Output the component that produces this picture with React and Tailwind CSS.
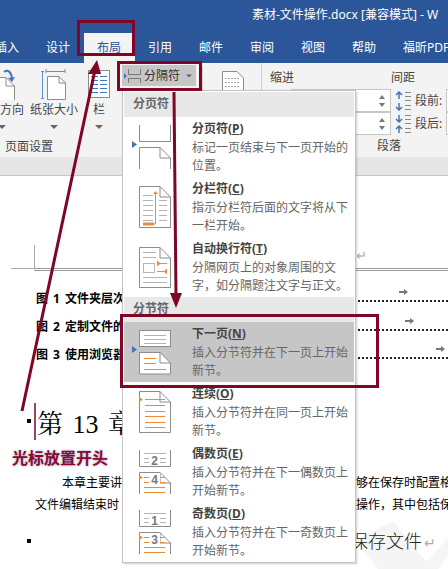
import React from "react";

const GRAY = "#8c8c8c";
const LINE = "#b4b4b4";
const ORANGE = "#ed8b37";
const RED = "#7f0624";

// page outline with folded corner, x from 15 to 46 in the icon box
function Page({ top, bottom, open = false }) {
    const d = `M15.5 ${open ? bottom : bottom - 0.5} V${top + 0.5} H36 L46.5 ${top + 11} V${open ? bottom : bottom - 0.5}${open ? "" : " H15.5"}`;
    return (
        <g>
            <path d={d} fill="#fff" stroke={GRAY} />
            <path d={`M36 ${top + 0.5} V${top + 11} H46.5`} fill="none" stroke={GRAY} />
        </g>
    );
}

function Lines({ ys, x1 = 20, x2 = 42, color = LINE }) {
    return ys.map((y) => <path key={y} d={`M${x1} ${y}.5 H${x2}`} stroke={color} />);
}

function Marker() {
    return <path d="M8 24 L13 27.5 L8 31 Z" fill="#3f78b8" />;
}

function IconPageBreak() {
    return (
        <svg width="69" height="60">
            <Marker />
            <path d="M15.5 8 V24.5 H46.5 V8" fill="none" stroke={GRAY} />
            <Page top={30} bottom={52} open />
        </svg>
    );
}

function IconColumn() {
    return (
        <svg width="69" height="60">
            <Page top={9} bottom={51} />
            <Lines ys={[18, 23, 28, 33, 38, 43]} x1={19} x2={29} />
            <Lines ys={[23, 28, 33, 38, 43]} x1={35} x2={43} />
            <path d="M19 47 H31.5 V16" fill="none" stroke={ORANGE} />
            <path d="M19 45.5 H30 V48.5 H19 Z" fill={ORANGE} />
            <path d="M29 17 L31.5 14 L34 17 Z" fill={ORANGE} />
        </svg>
    );
}

function IconWrap() {
    return (
        <svg width="69" height="60">
            <Page top={10} bottom={51} />
            <Lines ys={[15, 20]} x1={19} x2={32} />
            <rect x="19.5" y="26.5" width="11" height="9" fill="#fff" stroke={LINE} />
            <path d="M33 26.5 H43 M33 34.5 H43" stroke={ORANGE} />
            <path d="M33 23.5 L36.5 26.5 L33 29.5 Z M43 31.5 L39.5 34.5 L43 37.5 Z" fill={ORANGE} />
            <Lines ys={[40, 45]} x1={19} x2={43} />
        </svg>
    );
}

function IconNext() {
    return (
        <svg width="69" height="60">
            <Marker />
            <rect x="15.5" y="8.5" width="31" height="16" fill="#fff" stroke={GRAY} />
            <Lines ys={[13, 17, 21]} />
            <path d="M15.5 52 V30.5 H36 L46.5 41 V52 Z" fill="#fff" stroke={GRAY} />
            <path d="M36 30.5 V41 H46.5" fill="none" stroke={GRAY} />
            <Lines ys={[36, 41, 47]} x2={32} color={ORANGE} />
            <path d="M20 47.5 H42" stroke={ORANGE} />
        </svg>
    );
}

function IconContinuous() {
    return (
        <svg width="69" height="60">
            <Page top={9} bottom={51} />
            <path d="M15 15 L19 17.5 L15 20 Z" fill={ORANGE} />
            <Lines ys={[17, 23, 29, 34, 40, 45]} color={ORANGE} x1={21} x2={41} />
        </svg>
    );
}

function IconOddEven({ top, bottom }) {
    return (
        <svg width="69" height="60">
            <path d="M15.5 8 V24.5 H46.5 V8" fill="#fff" stroke={GRAY} />
            <Lines ys={[11, 16, 20]} />
            <rect x="25" y="12" width="11" height="12" fill="#fff" />
            <text x="30.5" y="23" textAnchor="middle" fontSize="12" fontWeight="700" fill="#777" fontFamily="'Liberation Sans', sans-serif">{top}</text>
            <path d="M15.5 52 V30.5 H36 L46.5 41 V52" fill="#fff" stroke={GRAY} />
            <path d="M36 30.5 V41 H46.5" fill="none" stroke={GRAY} />
            <path d="M15 33 L19 35.5 L15 38 Z" fill={ORANGE} />
            <Lines ys={[35, 40, 45, 50]} color={ORANGE} x1={20} x2={41} />
            <rect x="25" y="31" width="11" height="12" fill="#fff" />
            <text x="30.5" y="42" textAnchor="middle" fontSize="12" fontWeight="700" fill="#777" fontFamily="'Liberation Sans', sans-serif">{bottom}</text>
        </svg>
    );
}

function MenuItem({ icon, title, hotkey, lines, active }) {
    return (
        <div className={`flex h-[60px] ${active ? "bg-[#c6c6c6]" : ""}`}>
            <div className="w-[68px] shrink-0">{icon}</div>
            <div className="pt-[3px] text-[12px] leading-[18px] whitespace-nowrap text-[#666]">
                <div className="font-bold text-[#444]">
                    {title}(<span className="underline">{hotkey}</span>)
                </div>
                <div className="mt-[1px]">{lines[0]}</div>
                <div>{lines[1]}</div>
            </div>
        </div>
    );
}

function MenuHeader({ label }) {
    return <div className="h-[25px] pl-[9px] bg-[#e8e8e8] text-[12px] leading-[24px] font-bold text-[#666]">{label}</div>;
}

function BreakMenu() {
    return (
        <div className="absolute left-[122px] top-[90px] w-[234px] h-[473px] p-[1px] bg-white border border-[#c4c4c4] shadow-[1px_1px_2px_rgba(0,0,0,0.2)]">
            <MenuHeader label="分页符" />
            <MenuItem icon={<IconPageBreak />} title="分页符" hotkey="P" lines={["标记一页结束与下一页开始的", "位置。"]} />
            <MenuItem icon={<IconColumn />} title="分栏符" hotkey="C" lines={["指示分栏符后面的文字将从下", "一栏开始。"]} />
            <MenuItem icon={<IconWrap />} title="自动换行符" hotkey="T" lines={["分隔网页上的对象周围的文", "字，如分隔题注文字与正文。"]} />
            <MenuHeader label="分节符" />
            <MenuItem active icon={<IconNext />} title="下一页" hotkey="N" lines={["插入分节符并在下一页上开始", "新节。"]} />
            <MenuItem icon={<IconContinuous />} title="连续" hotkey="O" lines={["插入分节符并在同一页上开始", "新节。"]} />
            <MenuItem icon={<IconOddEven top="2" bottom="4" />} title="偶数页" hotkey="E" lines={["插入分节符并在下一偶数页上", "开始新节。"]} />
            <MenuItem icon={<IconOddEven top="1" bottom="3" />} title="奇数页" hotkey="D" lines={["插入分节符并在下一奇数页上", "开始新节。"]} />
        </div>
    );
}

function Caret() {
    return <div className="w-0 h-0 border-x-[4px] border-x-transparent border-t-[4px] border-t-[#666]" />;
}

function BigButton({ width, label, children }) {
    return (
        <div className={`flex flex-col items-center ${width}`}>
            <div className="h-[37px] pt-[6px]">{children}</div>
            <div className="text-[12px] leading-[18px] mt-[1px] text-[#444] whitespace-nowrap">{label}</div>
            <div className="mt-[6px]"><Caret /></div>
        </div>
    );
}

function SpinBox() {
    return (
        <div className="h-[23px] w-[100px] bg-white border border-[#c6c6c6] flex flex-col items-end justify-center gap-[4px] pr-[5px]">
            <div className="w-0 h-0 border-x-[3px] border-x-transparent border-b-[4px] border-b-[#777]" />
            <div className="w-0 h-0 border-x-[3px] border-x-transparent border-t-[4px] border-t-[#777]" />
        </div>
    );
}

function SpacingIcon({ flip }) {
    return (
        <svg width="18" height="20" className="shrink-0">
            <g stroke="#3f78b8" strokeWidth="1.5" fill="none">
                {flip ? (
                    <path d="M5 1 V8 M2 5 L5 8 L8 5 M5 19 V12 M2 15 L5 12 L8 15" />
                ) : (
                    <path d="M5 8 V1 M2 4 L5 1 L8 4 M5 12 V19 M2 16 L5 19 L8 16" />
                )}
            </g>
            <path d="M11 1.5 H17 M11 5.5 H17 M11 9.5 H17 M11 14.5 H17 M11 18.5 H17" stroke="#888" />
        </svg>
    );
}

function Ribbon() {
    return (
        <div className="flex h-[94px] bg-[#f3f3f3]">
            <div className="w-[262px] shrink-0 flex flex-col border-r border-r-[#d0d0d0]">
                <div className="flex h-[75px]">
                    <div className="w-[24px] overflow-hidden flex flex-col">
                        <div className="h-[37px] pt-[6px]">
                            <svg width="24" height="31">
                                <path d="M-8 8.5 H6 L14.5 17 V36 H-8 Z" fill="#fff" stroke={GRAY} />
                                <path d="M6 8.5 V17 H14.5" fill="none" stroke={GRAY} />
                                <path d="M4 3 C8 0 11 3 12 9" fill="none" stroke="#3f78b8" strokeWidth="2" />
                                <path d="M8 9 L12 13 L15 8 Z" fill="#3f78b8" />
                            </svg>
                        </div>
                        <div className="text-[12px] leading-[18px] mt-[1px] text-[#444] whitespace-nowrap">方向</div>
                        <div className="mt-[6px] -ml-[2px]"><Caret /></div>
                    </div>
                    <BigButton width="w-[60px]" label="纸张大小">
                        <svg width="26" height="31">
                            <path d="M1.5 2 V30" stroke="#5b93cf" fill="none" />
                            <path d="M0 2.5 H3 M0 29.5 H3" stroke="#5b93cf" />
                            <path d="M5 2.5 H24 M5 0 V4 M24 0 V4" stroke="#5b93cf" fill="none" />
                            <path d="M6.5 30.5 V7.5 H18 L24.5 14 V30.5 Z" fill="#fff" stroke={GRAY} />
                            <path d="M18 7.5 V14 H24.5" fill="none" stroke={GRAY} />
                        </svg>
                    </BigButton>
                    <BigButton width="w-[30px]" label="栏">
                        <svg width="24" height="30">
                            <rect x="1.5" y="1.5" width="21" height="27" fill="#fff" stroke={GRAY} />
                            <path d="M4 7.5 H11 M4 11.5 H11 M4 15.5 H11 M4 19.5 H11 M4 23.5 H11 M13 7.5 H20 M13 11.5 H20 M13 15.5 H20 M13 19.5 H20 M13 23.5 H20" stroke="#3f78b8" />
                        </svg>
                    </BigButton>
                    <div className="ml-[8px] w-[80px] pt-[2px]">
                        <div className="flex items-center h-[21px] w-[74px] bg-[#c6c6c6]">
                            <svg width="20" height="18" className="shrink-0">
                                <path d="M2 6 L5 9 L2 12 Z" fill="#3f78b8" />
                                <path d="M6.5 2 V7.5 H18.5 V2 M6.5 16 V11.5 H18.5 V16" fill="none" stroke="#777" />
                            </svg>
                            <span className="ml-[2px] text-[12px] text-[#333] whitespace-nowrap">分隔符</span>
                            <div className="ml-[5px] scale-75"><Caret /></div>
                        </div>
                    </div>
                    <div className="w-[1px] h-[24px] mt-[3px] bg-[#d0d0d0]" />
                    <div className="ml-[18px] pt-[7px]">
                        <svg width="24" height="22">
                            <path d="M1.5 22 V1.5 H16 L22.5 8 V22" fill="#fff" stroke={GRAY} />
                            <path d="M4 8.5 H19 M4 12.5 H19 M4 16.5 H19 M4 20.5 H19" stroke="#aaa" strokeDasharray="2 1" />
                        </svg>
                    </div>
                </div>
                <div className="pl-[5px] text-[12px] leading-[18px] text-[#444]">页面设置</div>
            </div>
            <div className="flex-1 min-w-0 flex flex-col overflow-hidden">
                <div className="flex h-[26px] pl-[8px] text-[12px] leading-[29px] text-[#444]">
                    <span className="w-[121px]">缩进</span>
                    <span>间距</span>
                </div>
                <div className="flex">
                    <div className="w-[100px] ml-[29px] shrink-0 flex flex-col">
                        <SpinBox />
                        <SpinBox />
                    </div>
                    <div className="flex flex-col shrink-0 ml-[3px] gap-[3px] pt-[2px]">
                        <div className="flex items-center h-[20px]">
                            <SpacingIcon />
                            <span className="ml-[3px] text-[12px] text-[#444] whitespace-nowrap">段前:</span>
                        </div>
                        <div className="flex items-center h-[20px]">
                            <SpacingIcon flip />
                            <span className="ml-[3px] text-[12px] text-[#444] whitespace-nowrap">段后:</span>
                        </div>
                    </div>
                    <div className="ml-[4px] w-[20px] shrink-0 flex flex-col">
                        <div className="h-[23px] bg-white border border-[#c6c6c6]" />
                        <div className="h-[23px] bg-white border border-[#c6c6c6]" />
                    </div>
                </div>
                <div className="pl-[115px] mt-[2px] text-[12px] leading-[18px] text-[#444]">段落</div>
            </div>
        </div>
    );
}

function TocRow({ label, arrowLeft, height }) {
    return (
        <div className={`relative flex items-center pl-[36px] ${height} text-[12px] [word-spacing:2px] font-bold text-black`}>
            <span className="whitespace-nowrap">{label}</span>
            <div className="flex-1 mt-[5px] border-b-2 border-dotted border-[#222]" />
            <span className={`absolute top-[7px] ${arrowLeft} w-[8px] h-[2px] bg-[#777]`} />
            <span className={`absolute top-[5px] ${arrowLeft} ml-[5px] w-0 h-0 border-y-[3px] border-y-transparent border-l-[4px] border-l-[#777]`} />
        </div>
    );
}

function Document() {
    return (
        <div className="relative flex-1 bg-white text-[12px] text-black overflow-hidden">
            <svg className="absolute left-0 top-0" width="448" height="394">
                <path d="M356 364 L393 345 L432 393 H378 Z M448 362 V380 L438 393 H420 Z" fill="#f5f5f5" />
            </svg>
            <div className="relative">
                <div className="flex mt-[69px] h-[23px]">
                    <div className="ml-[34px] w-[1px] bg-[#aaa]" />
                    <span className="ml-[321px] text-[13px] leading-[20px] text-[#aaa]">↵</span>
                </div>
                <div className="flex">
                    <div className="ml-[11px] w-[23px] border-t border-[#aaa]" />
                    <div className="flex-1 h-[3px] border-y border-[#999]" />
                </div>
                <div className="mt-[13px]">
                    <TocRow label="图 1 文件夹层次结构" arrowLeft="left-[399px]" height="h-[29px]" />
                    <TocRow label="图 2 定制文件的保存路径" arrowLeft="left-[405px]" height="h-[28px]" />
                    <TocRow label="图 3 使用浏览器打开文件" arrowLeft="left-[436px]" height="h-[28px]" />
                </div>
                <div className="mt-[34px] flex items-center h-[42px]">
                    <div className="ml-[27px] w-[4px] h-[4px] -mt-[6px] bg-black" />
                    <div className="ml-[6px] font-['Liberation_Serif','Noto_Serif_CJK_SC','Noto_Sans_CJK_SC',serif] text-[26px] [word-spacing:3px] whitespace-nowrap">第 13 章</div>
                </div>
                <div className="pl-[12px] h-[24px] mt-[1px] text-[16px] leading-[24px] font-bold text-[#8a0a28] [text-shadow:0_0_3px_#9a9ad0]">光标放置开头</div>
                <div className="flex justify-between h-[22px] mt-[2px] leading-[22px] pl-[62px] whitespace-nowrap">
                    <span>本章主要讲解</span>
                    <span className="w-[92px] overflow-hidden">够在保存时配置格式</span>
                </div>
                <div className="flex justify-between h-[22px] leading-[22px] pl-[35px] whitespace-nowrap">
                    <span>文件编辑结束时</span>
                    <span className="w-[92px] overflow-hidden">操作，其中包括保存</span>
                </div>
                <div className="flex items-center justify-between h-[30px] mt-[10px]">
                    <div className="ml-[27px] w-[4px] h-[4px] bg-black" />
                    <div className="w-[98px] whitespace-nowrap text-[18px] font-light text-[#222]">
                        保存文件<span className="ml-[2px] text-[#aaa] text-[14px]">↵</span>
                    </div>
                </div>
            </div>
        </div>
    );
}

function Annotations() {
    return (
        <svg className="absolute left-0 top-0 pointer-events-none" width="448" height="569">
            <g fill="none" stroke={RED} strokeWidth="3">
                <rect x="78.5" y="21.5" width="55" height="33" />
                <rect x="118.5" y="62.5" width="82" height="27" />
                <rect x="121.5" y="315.5" width="256" height="71" />
                <path d="M22 411 L95 70" />
                <path d="M174 92 L176 296" />
            </g>
            <path d="M97 60 L88 74 L101 74 Z" fill={RED} />
            <path d="M176 308 L170 293 L182 293 Z" fill={RED} />
            <path d="M35 403 V440" stroke={RED} strokeWidth="1.5" />
        </svg>
    );
}

export default function App() {
    const tabs = ["插入", "设计", "布局", "引用", "邮件", "审阅", "视图", "帮助", "福昕PDF"];

    return (
        <div className="relative flex flex-col w-[448px] h-[569px] overflow-hidden bg-white font-['Noto_Sans','Noto_Sans_CJK_SC',sans-serif]">
            <div className="h-[63px] shrink-0 bg-[#2b579a] text-white text-[12px] overflow-hidden">
                <div className="h-[33px] pl-[252px] leading-[29px] whitespace-nowrap">素材-文件操作.docx [兼容模式]  -  W</div>
                <div className="flex h-[30px] -ml-[18px]">
                    {tabs.map((tab) => (
                        <div key={tab} className={`shrink-0 w-[51px] pl-[13px] leading-[29px] whitespace-nowrap ${tab === "布局" ? "bg-[#f3f3f3] text-[#2b579a]" : ""}`}>
                            {tab}
                        </div>
                    ))}
                </div>
            </div>
            <Ribbon />
            <div className="h-[19px] shrink-0 bg-[#e6e6e6] border-b border-[#c6c6c6]" />
            <Document />
            <BreakMenu />
            <Annotations />
        </div>
    );
}
